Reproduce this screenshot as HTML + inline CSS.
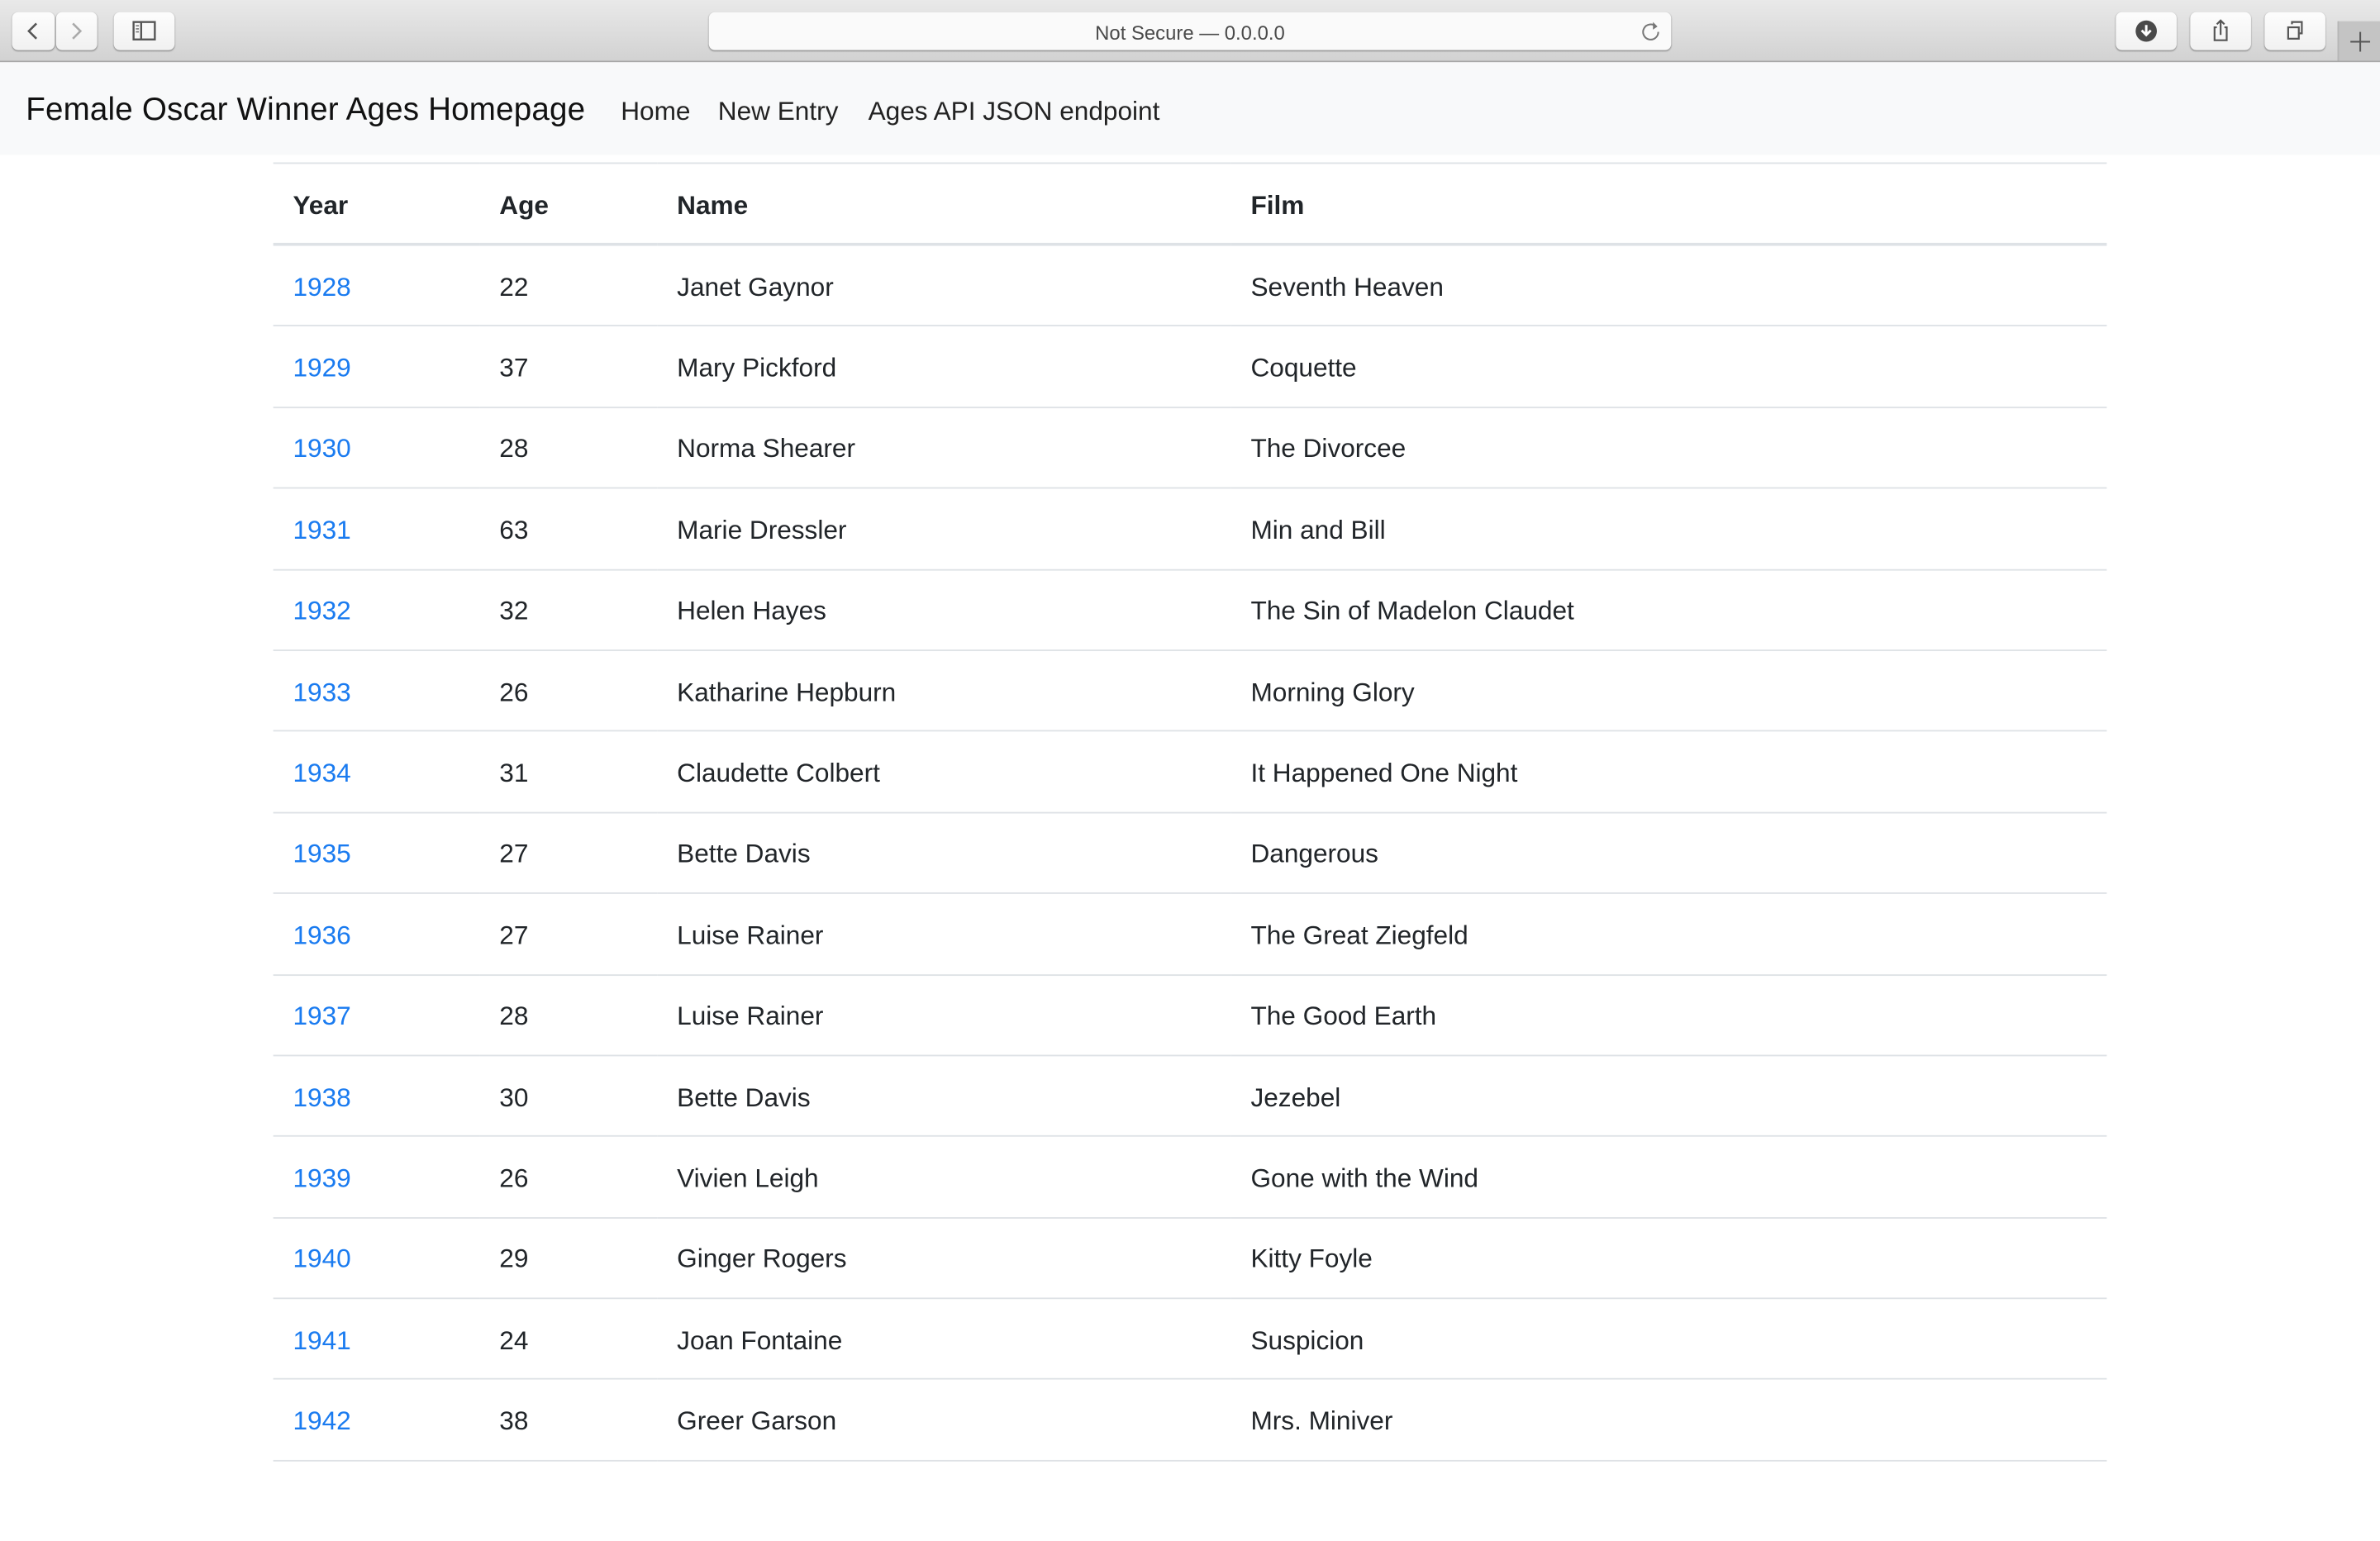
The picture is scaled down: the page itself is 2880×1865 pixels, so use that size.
<!DOCTYPE html>
<html><head><meta charset="utf-8"><style>
html,body{margin:0;padding:0;width:2880px;height:1800px;overflow:hidden;background:#fff}
#w{position:absolute;left:0;top:0;width:1568px;height:980px;transform:scale(1.836735);transform-origin:0 0;font-family:"Liberation Sans",Arial,sans-serif;color:#212529}
#tb{position:absolute;left:0;top:0;width:1568px;height:40px;background:linear-gradient(#e9e9e9,#d2d2d2);border-bottom:1px solid #a8a8a8}
.btn{position:absolute;top:8px;height:25px;background:linear-gradient(#fdfdfd,#f1f1f1);border-radius:4px;box-shadow:0 0.5px 1px rgba(0,0,0,.35)}
.btn svg{position:absolute;left:0;top:0}
#url{position:absolute;left:467px;top:8px;width:634px;height:25px;background:#fafafa;border-radius:4px;box-shadow:0 0.5px 1px rgba(0,0,0,.35);text-align:center;font-size:13px;line-height:27px;color:#4a4a4a}
#plus{position:absolute;left:1540px;top:14px;width:28px;height:26px;background:#c4c4c4;border-left:1px solid #b5b5b5}
#nav{position:absolute;left:0;top:41px;width:1568px;height:61px;background:#f8f9fa}
#brand{position:absolute;left:17px;top:20px;font-size:21px;letter-spacing:0.1px;line-height:24px;color:#111}
.nl{position:absolute;top:22px;font-size:17.2px;line-height:20px;color:#222}
table{position:absolute;left:180px;top:107px;width:1208px;border-collapse:collapse;font-size:17.2px}
th,td{padding:2px 0 0 13px;text-align:left;height:50.4px;border-top:1px solid #dee2e6;vertical-align:middle}
th{font-weight:bold;height:50px;border-bottom:2px solid #dee2e6}
td a{color:#1a7bf0;text-decoration:none}
</style></head><body><div id="w">
<div id="tb">
 <div class="btn" style="left:8px;width:28px"><svg width="28" height="25"><path d="M16 7.5 L11 12.5 L16 17.5" fill="none" stroke="#555" stroke-width="1.4"/></svg></div>
 <div class="btn" style="left:37px;width:27px"><svg width="27" height="25"><path d="M11 7.5 L16 12.5 L11 17.5" fill="none" stroke="#aaa" stroke-width="1.4"/></svg></div>
 <div class="btn" style="left:75px;width:40px"><svg width="40" height="25"><rect x="13" y="6.5" width="14" height="11.5" fill="none" stroke="#555" stroke-width="1.3"/><line x1="18" y1="6.5" x2="18" y2="18" stroke="#555" stroke-width="1.3"/><path d="M14.5 9h2M14.5 11h2M14.5 13h2" stroke="#777" stroke-width="0.9"/></svg></div>
 <div id="url">Not Secure — 0.0.0.0<svg style="position:absolute;right:6px;top:5px" width="14" height="15"><path d="M10 4.5 A5 5 0 1 0 11.5 8" fill="none" stroke="#777" stroke-width="1.1"/><path d="M8 1.5 L11 4.5 L8 6.5" fill="#777"/></svg></div>
 <div class="btn" style="left:1394px;width:40px"><svg width="40" height="25"><circle cx="20" cy="12.5" r="7" fill="#4a4a4a"/><path d="M20 8.5v6M17 12l3 3 3-3" fill="none" stroke="#fff" stroke-width="1.6"/></svg></div>
 <div class="btn" style="left:1443px;width:40px"><svg width="40" height="25"><path d="M17.5 10H16v8.5h8V10h-1.5M20 15V5.5M17.5 8l2.5-2.5 2.5 2.5" fill="none" stroke="#555" stroke-width="1.2"/></svg></div>
 <div class="btn" style="left:1492px;width:40px"><svg width="40" height="25"><rect x="15.5" y="10" width="7" height="7.5" fill="none" stroke="#555" stroke-width="1.2"/><path d="M18 8V6.5h6.5v7.5H23" fill="none" stroke="#555" stroke-width="1.2"/></svg></div>
 <div id="plus"><svg width="28" height="26"><path d="M14 7v13M7.5 13.5h13" stroke="#555" stroke-width="1.1"/></svg></div>
</div>
<div id="nav">
 <div id="brand">Female Oscar Winner Ages Homepage</div>
 <div class="nl" style="left:409px">Home</div>
 <div class="nl" style="left:473px">New Entry</div>
 <div class="nl" style="left:572px">Ages API JSON endpoint</div>
</div>
<table>
<tr><th style="width:123px">Year</th><th style="width:104px">Age</th><th style="width:365px">Name</th><th>Film</th></tr>
<tr><td><a>1928</a></td><td>22</td><td>Janet Gaynor</td><td>Seventh Heaven</td></tr>
<tr><td><a>1929</a></td><td>37</td><td>Mary Pickford</td><td>Coquette</td></tr>
<tr><td><a>1930</a></td><td>28</td><td>Norma Shearer</td><td>The Divorcee</td></tr>
<tr><td><a>1931</a></td><td>63</td><td>Marie Dressler</td><td>Min and Bill</td></tr>
<tr><td><a>1932</a></td><td>32</td><td>Helen Hayes</td><td>The Sin of Madelon Claudet</td></tr>
<tr><td><a>1933</a></td><td>26</td><td>Katharine Hepburn</td><td>Morning Glory</td></tr>
<tr><td><a>1934</a></td><td>31</td><td>Claudette Colbert</td><td>It Happened One Night</td></tr>
<tr><td><a>1935</a></td><td>27</td><td>Bette Davis</td><td>Dangerous</td></tr>
<tr><td><a>1936</a></td><td>27</td><td>Luise Rainer</td><td>The Great Ziegfeld</td></tr>
<tr><td><a>1937</a></td><td>28</td><td>Luise Rainer</td><td>The Good Earth</td></tr>
<tr><td><a>1938</a></td><td>30</td><td>Bette Davis</td><td>Jezebel</td></tr>
<tr><td><a>1939</a></td><td>26</td><td>Vivien Leigh</td><td>Gone with the Wind</td></tr>
<tr><td><a>1940</a></td><td>29</td><td>Ginger Rogers</td><td>Kitty Foyle</td></tr>
<tr><td><a>1941</a></td><td>24</td><td>Joan Fontaine</td><td>Suspicion</td></tr>
<tr><td><a>1942</a></td><td>38</td><td>Greer Garson</td><td>Mrs. Miniver</td></tr>
<tr><td></td><td></td><td></td><td></td></tr>
</table>
</div></body></html>
